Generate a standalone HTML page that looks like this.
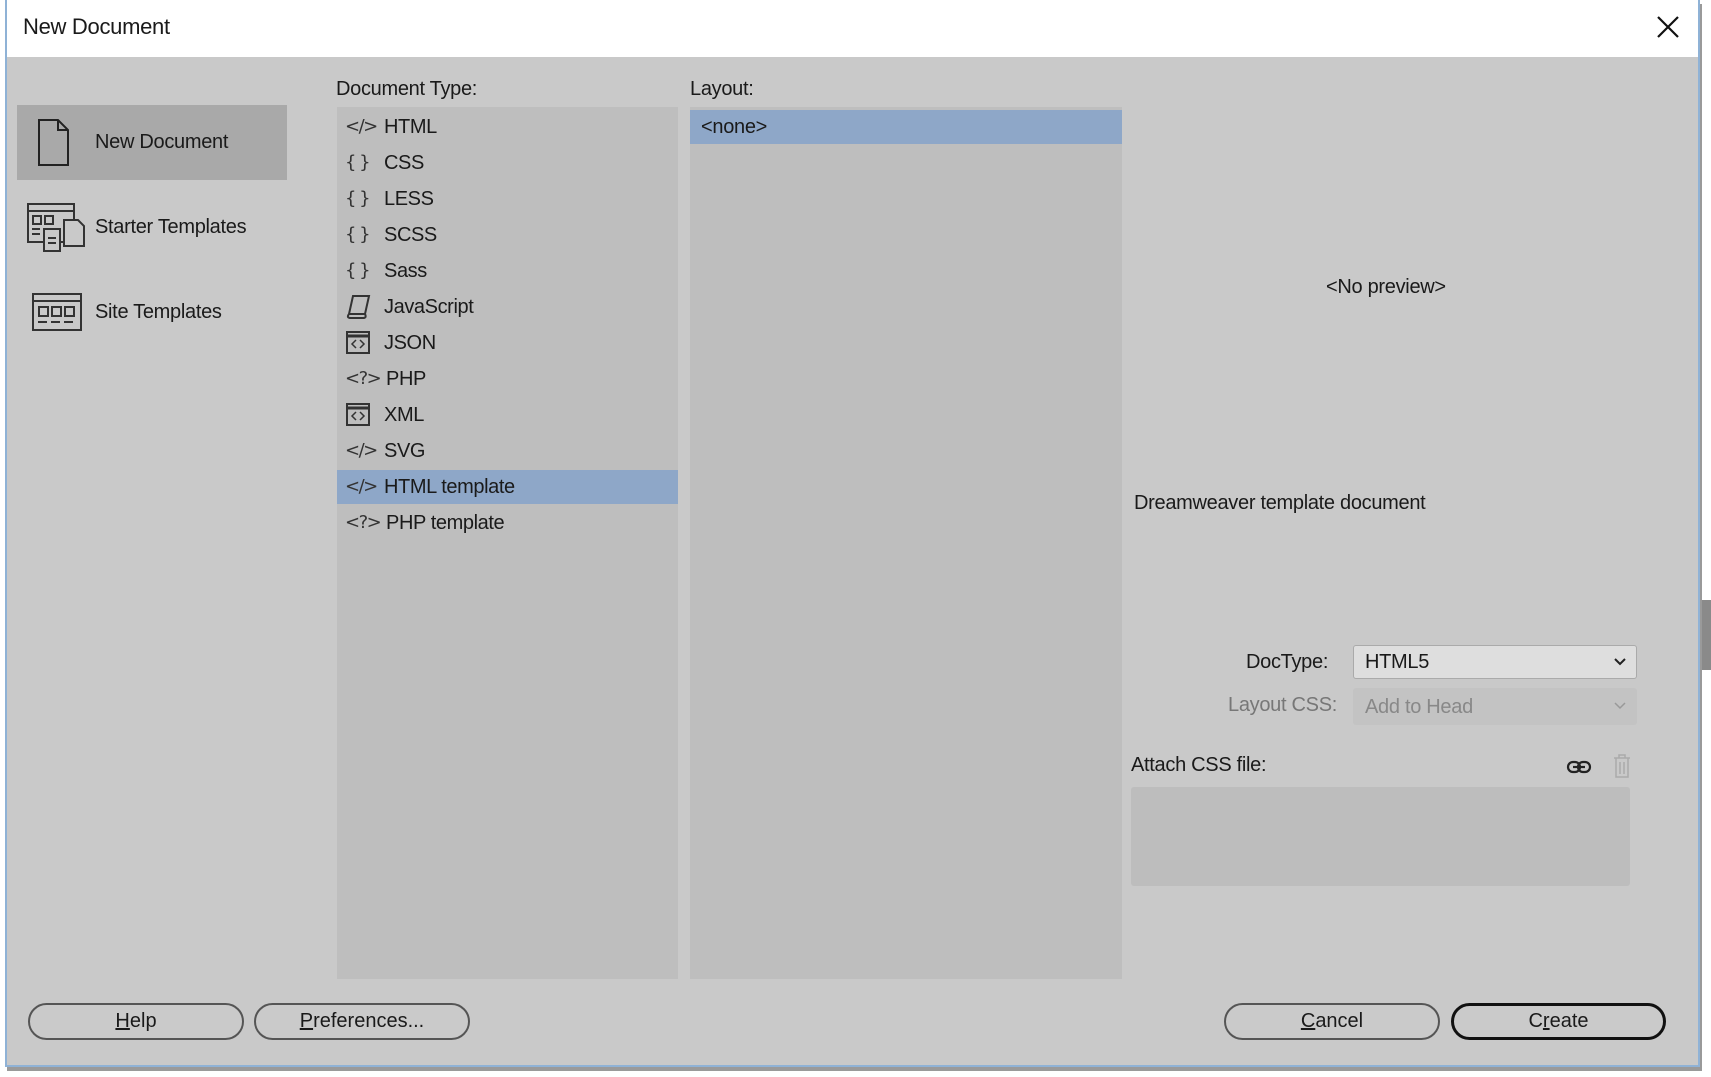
<!DOCTYPE html>
<html><head><meta charset="utf-8"><style>
*{margin:0;padding:0;box-sizing:border-box}
body{width:1711px;height:1077px;background:#fff;position:relative;overflow:hidden;font-family:"Liberation Sans",sans-serif;color:#1a1a1a}
.abs{position:absolute}
#dlg{left:5px;top:0;width:1695px;height:1067px;border-left:2px solid #8fb2d6;border-right:2px solid #8fb2d6;border-bottom:2px solid #8fb2d6;background:#c9c9c9;box-shadow:2px 4px 0 #9a9a9a}
#title{left:0;top:0;width:1691px;height:57px;background:#fff}
.t{font-size:20px;white-space:nowrap;letter-spacing:-0.3px}
.list{background:#bebebe}
.row{position:absolute;left:0;right:0;height:34px}
.row .ic{position:absolute;left:8px;top:4px;width:36px;height:26px}
.row .tx{position:absolute;left:47px;top:6px;font-size:20px;letter-spacing:-0.4px;white-space:nowrap}
.sel{background:#8ea7c8}
.btn{position:absolute;top:1003px;height:37px;border:2px solid #555;border-radius:19px;font-size:20px;text-align:center;line-height:33px;background:#cacaca}
.btn u{text-decoration:underline}
.sym{font-family:"DejaVu Sans",sans-serif;font-size:18px;position:absolute;left:0;top:2px;color:#333;white-space:nowrap;letter-spacing:-1.5px}
</style></head><body>
<div id="dlg" class="abs">
 <div id="title" class="abs"></div>
</div>
<div class="abs t" style="left:23px;top:14px;font-size:22px">New Document</div>
<svg class="abs" style="left:1656px;top:15px" width="24" height="24"><path d="M2 2L22 22M22 2L2 22" stroke="#111" stroke-width="2.2"/></svg>
<div class="abs" style="left:1702px;top:600px;width:9px;height:70px;background:#8a8a8a"></div>

<div class="abs" style="left:17px;top:105px;width:270px;height:75px;background:#a9a9a9"></div>
<svg class="abs" style="left:37px;top:118px" width="34" height="50"><path d="M2 2H21L31 12V47H2Z M21 2V12H31" fill="none" stroke="#222" stroke-width="2"/></svg>
<div class="abs t" style="left:95px;top:131px">New Document</div>
<svg class="abs" style="left:26px;top:202px" width="62" height="54" fill="none" stroke="#333" stroke-width="2"><rect x="2" y="2" width="46" height="38"/><line x1="2" y1="9" x2="48" y2="9"/><rect x="7" y="14" width="8" height="8"/><rect x="19" y="14" width="8" height="8"/><line x1="6" y1="27" x2="14" y2="27"/><line x1="6" y1="32" x2="14" y2="32"/><rect x="18" y="27" width="16" height="22" fill="#c9c9c9"/><line x1="22" y1="36" x2="30" y2="36"/><line x1="22" y1="41" x2="30" y2="41"/><path d="M38 18H52L58 24V44H38Z" fill="#c9c9c9"/></svg>
<div class="abs t" style="left:95px;top:216px">Starter Templates</div>
<svg class="abs" style="left:31px;top:292px" width="52" height="40" fill="none" stroke="#333" stroke-width="2"><rect x="2" y="2" width="48" height="36"/><line x1="2" y1="9" x2="50" y2="9"/><rect x="8" y="15" width="9" height="9"/><rect x="21" y="15" width="9" height="9"/><rect x="34" y="15" width="9" height="9"/><line x1="7" y1="30" x2="45" y2="30" stroke-dasharray="9 4"/></svg>
<div class="abs t" style="left:95px;top:301px">Site Templates</div>

<div class="abs t" style="left:336px;top:78px">Document Type:</div>
<div class="abs list" style="left:337px;top:107px;width:341px;height:872px"></div>
<div class="abs" style="left:337px;top:108px;width:341px">
 <div class="row" style="top:2px"><div class="ic"><span class="sym">&lt;/&gt;</span></div><div class="tx">HTML</div></div>
 <div class="row" style="top:38px"><div class="ic"><span class="sym">{ }</span></div><div class="tx">CSS</div></div>
 <div class="row" style="top:74px"><div class="ic"><span class="sym">{ }</span></div><div class="tx">LESS</div></div>
 <div class="row" style="top:110px"><div class="ic"><span class="sym">{ }</span></div><div class="tx">SCSS</div></div>
 <div class="row" style="top:146px"><div class="ic"><span class="sym">{ }</span></div><div class="tx">Sass</div></div>
 <div class="row" style="top:182px"><div class="ic"><svg width="28" height="26" fill="none" stroke="#333" stroke-width="2"><path d="M8 2H24L20 20H4Z M4 20Q1 24 6 24H18Q22 24 20 20"/></svg></div><div class="tx">JavaScript</div></div>
 <div class="row" style="top:218px"><div class="ic"><svg width="28" height="26" fill="none" stroke="#333" stroke-width="2"><rect x="2" y="2" width="22" height="21"/><line x1="2" y1="6" x2="24" y2="6" stroke-width="3"/><path d="M11 10L7 14L11 18M15 10L19 14L15 18" stroke-width="1.5"/></svg></div><div class="tx">JSON</div></div>
 <div class="row" style="top:254px"><div class="ic"><span class="sym">&lt;?&gt;</span></div><div class="tx" style="left:49px">PHP</div></div>
 <div class="row" style="top:290px"><div class="ic"><svg width="28" height="26" fill="none" stroke="#333" stroke-width="2"><rect x="2" y="2" width="22" height="21"/><line x1="2" y1="6" x2="24" y2="6" stroke-width="3"/><path d="M11 10L7 14L11 18M15 10L19 14L15 18" stroke-width="1.5"/></svg></div><div class="tx">XML</div></div>
 <div class="row" style="top:326px"><div class="ic"><span class="sym">&lt;/&gt;</span></div><div class="tx">SVG</div></div>
 <div class="row sel" style="top:362px"><div class="ic"><span class="sym">&lt;/&gt;</span></div><div class="tx">HTML template</div></div>
 <div class="row" style="top:398px"><div class="ic"><span class="sym">&lt;?&gt;</span></div><div class="tx" style="left:49px">PHP template</div></div>
</div>

<div class="abs t" style="left:690px;top:78px">Layout:</div>
<div class="abs list" style="left:690px;top:107px;width:432px;height:872px"></div>
<div class="abs sel" style="left:690px;top:110px;width:432px;height:34px"></div>
<div class="abs t" style="left:701px;top:116px">&lt;none&gt;</div>

<div class="abs t" style="left:1326px;top:276px">&lt;No preview&gt;</div>
<div class="abs t" style="left:1134px;top:492px">Dreamweaver template document</div>

<div class="abs t" style="left:1246px;top:651px">DocType:</div>
<div class="abs" style="left:1353px;top:645px;width:284px;height:34px;background:#dedede;border:1px solid #aaa;border-radius:3px"></div>
<div class="abs t" style="left:1365px;top:651px">HTML5</div>
<svg class="abs" style="left:1613px;top:657px" width="14" height="10"><path d="M2 2L7 7L12 2" fill="none" stroke="#222" stroke-width="2"/></svg>
<div class="abs t" style="left:1228px;top:694px;color:#777">Layout CSS:</div>
<div class="abs" style="left:1353px;top:688px;width:284px;height:37px;background:#c3c3c3;border-radius:3px"></div>
<div class="abs t" style="left:1365px;top:696px;color:#888">Add to Head</div>
<svg class="abs" style="left:1613px;top:701px" width="14" height="10"><path d="M2 2L7 7L12 2" fill="none" stroke="#999" stroke-width="1.5"/></svg>

<div class="abs t" style="left:1131px;top:754px">Attach CSS file:</div>
<svg class="abs" style="left:1566px;top:758px" width="26" height="18" fill="none" stroke="#222" stroke-width="2.2"><rect x="2" y="4" width="12" height="10" rx="5"/><rect x="12" y="4" width="12" height="10" rx="5"/><line x1="7" y1="9" x2="19" y2="9"/></svg>
<svg class="abs" style="left:1612px;top:753px" width="20" height="26" fill="none" stroke="#aaa" stroke-width="1.5"><path d="M2 5H18M7 5V2H13V5M4 5V24H16V5M8 9V21M12 9V21"/></svg>
<div class="abs" style="left:1131px;top:787px;width:499px;height:99px;background:#bdbdbd;border-radius:3px"></div>

<div class="btn" style="left:28px;width:216px"><u>H</u>elp</div>
<div class="btn" style="left:254px;width:216px"><u>P</u>references...</div>
<div class="btn" style="left:1224px;width:216px"><u>C</u>ancel</div>
<div class="btn" style="left:1451px;width:215px;border:3px solid #111;line-height:31px">C<u>r</u>eate</div>
</body></html>
